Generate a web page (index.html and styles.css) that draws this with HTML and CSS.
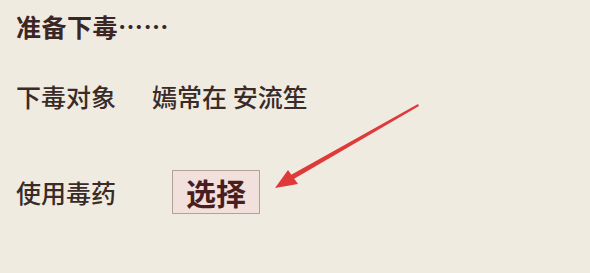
FILE: index.html
```html
<!DOCTYPE html>
<html lang="zh-CN">
<head>
<meta charset="utf-8">
<link rel="stylesheet" href="styles.css">
</head>
<body>
<div class="page">
  <div class="row title">准备下毒……</div>
  <div class="row target">
    <span class="label">下毒对象</span>
    <span class="value">嫣常在 安流笙</span>
  </div>
  <div class="row poison">
    <span class="label">使用毒药</span>
    <button class="pick">选择</button>
  </div>
  <svg class="arrow" width="590" height="273" viewBox="0 0 590 273">
    <polygon points="418,104 419,106 292,180 289,176" fill="#e0393a"/>
    <polygon points="275,188 288,170 298,184" fill="#e0393a"/>
  </svg>
</div>
</body>
</html>
```
FILE: styles.css
```css
html, body {
  margin: 0;
  padding: 0;
}
body {
  background: #efebe1;
  font-family: "Noto Sans CJK SC", "Noto Sans", sans-serif;
  color: #3a2b28;
  width: 590px;
  height: 273px;
  overflow: hidden;
}
.page {
  position: relative;
  width: 590px;
  height: 273px;
  display: flex;
  flex-direction: column;
  padding: 12px 0 0 16px;
  box-sizing: border-box;
}
.row {
  display: flex;
  align-items: center;
  font-size: 25px;
  line-height: 28px;
  height: 28px;
}
.title {
  font-weight: 700;
  letter-spacing: 0.5px;
  color: #3b2624;
  margin-bottom: 42px;
}
.target {
  margin-bottom: 60px;
}
.label {
  font-weight: 500;
  letter-spacing: 0;
  width: 136px;
}
.value {
  font-weight: 500;
}
.poison {
  height: 44px;
}
.poison .label {
  width: 156px;
}
.pick {
  width: 88px;
  height: 44px;
  box-sizing: border-box;
  border: 1px solid #b3a29a;
  background: #f2e0dc;
  font-family: "Noto Sans CJK SC", sans-serif;
  font-weight: 700;
  font-size: 30px;
  line-height: 1;
  color: #4a1e1e;
  padding: 0;
  letter-spacing: 0;
}
.arrow {
  position: absolute;
  left: 0;
  top: 0;
  pointer-events: none;
}
```
